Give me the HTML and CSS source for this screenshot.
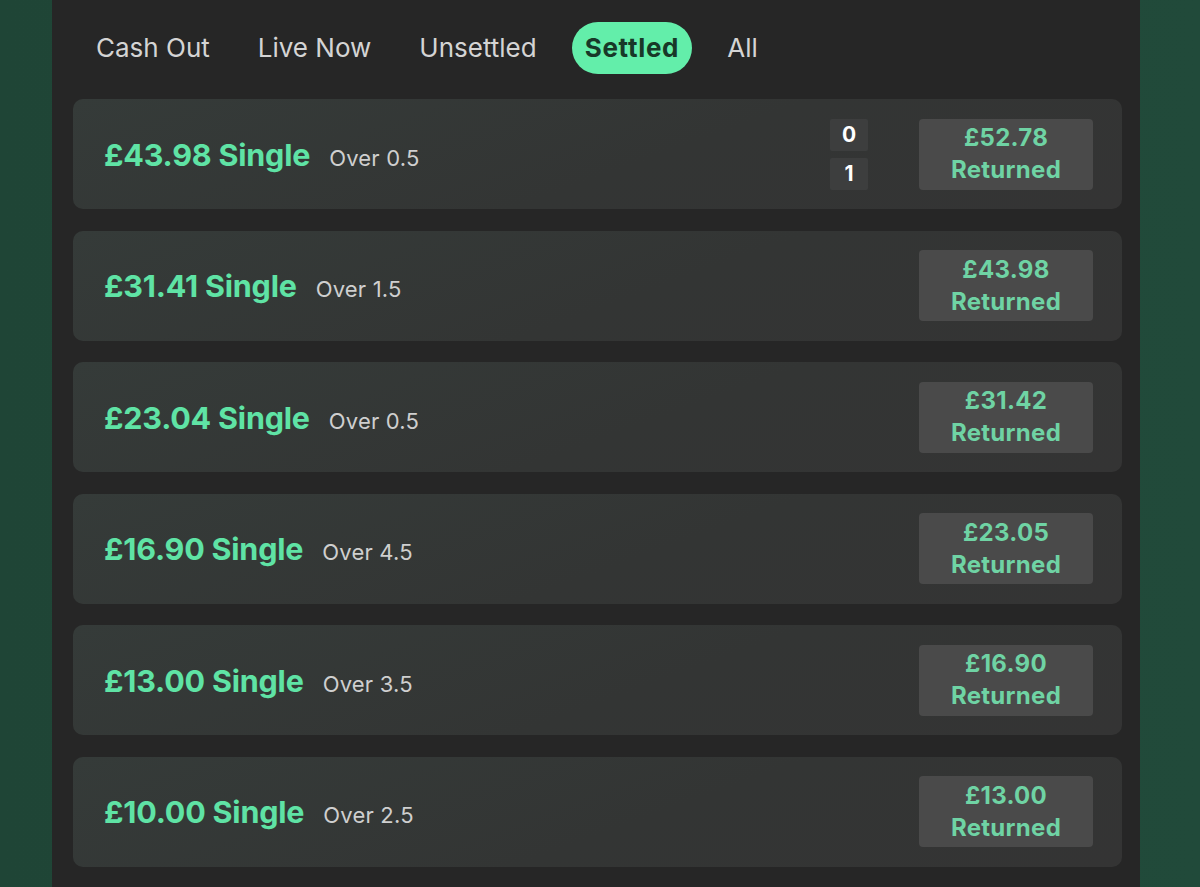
FILE: index.html
```html
<!DOCTYPE html>
<html lang="en">
<head>
<meta charset="utf-8">
<title>My Bets - Settled</title>
<link rel="stylesheet" href="styles.css">
</head>
<body>
<div class="page">
  <main class="panel">
    <nav class="tabs">
      <span class="tab">Cash Out</span>
      <span class="tab">Live Now</span>
      <span class="tab">Unsettled</span>
      <span class="tab active">Settled</span>
      <span class="tab">All</span>
    </nav>
    <section class="bets">
      <article class="bet">
        <div class="title"><span class="stake">£43.98 Single</span><span class="market">Over 0.5</span></div>
        <div class="score"><span>0</span><span>1</span></div>
        <div class="returned"><span>£52.78</span><span>Returned</span></div>
      </article>
      <article class="bet">
        <div class="title"><span class="stake">£31.41 Single</span><span class="market">Over 1.5</span></div>
        <div class="returned"><span>£43.98</span><span>Returned</span></div>
      </article>
      <article class="bet">
        <div class="title"><span class="stake">£23.04 Single</span><span class="market">Over 0.5</span></div>
        <div class="returned"><span>£31.42</span><span>Returned</span></div>
      </article>
      <article class="bet">
        <div class="title"><span class="stake">£16.90 Single</span><span class="market">Over 4.5</span></div>
        <div class="returned"><span>£23.05</span><span>Returned</span></div>
      </article>
      <article class="bet">
        <div class="title"><span class="stake">£13.00 Single</span><span class="market">Over 3.5</span></div>
        <div class="returned"><span>£16.90</span><span>Returned</span></div>
      </article>
      <article class="bet">
        <div class="title"><span class="stake">£10.00 Single</span><span class="market">Over 2.5</span></div>
        <div class="returned"><span>£13.00</span><span>Returned</span></div>
      </article>
    </section>
  </main>
</div>
</body>
</html>
```
FILE: styles.css
```css
html, body {
  margin: 0;
  padding: 0;
  height: 100%;
}
body {
  background: linear-gradient(90deg, #1f4536 0%, #214a3a 100%);
  font-family: Inter, "Noto Sans", "Liberation Sans", sans-serif;
  overflow: hidden;
}
.page {
  display: flex;
  height: 100%;
}
.panel {
  margin-left: 52px;
  width: 1088px;
  background: #262626;
  box-sizing: border-box;
  padding: 22px 18px 0 21px;
}
.tabs {
  display: flex;
  align-items: center;
  gap: 22px;
  padding-left: 10px;
  height: 52px;
  margin-bottom: 25px;
}
.tab {
  height: 52px;
  line-height: 52px;
  padding: 0 13px;
  border-radius: 26px;
  font-size: 26px;
  color: #d4d4d4;
  letter-spacing: 0;
}
.tab.active {
  background: #63eeaa;
  color: #183828;
  font-weight: 700;
  letter-spacing: 0.7px;
}
.bets {
  display: flex;
  flex-direction: column;
  gap: 21.6px;
}
.bet {
  height: 110px;
  border-radius: 10px;
  background: linear-gradient(160deg, #353b39 0%, #333534 55%, #343434 100%);
  display: flex;
  align-items: center;
  padding: 0 29px 0 31px;
}
.title {
  flex: 1;
  display: flex;
  align-items: baseline;
  gap: 19px;
}
.stake {
  font-size: 30.5px;
  font-weight: 700;
  color: #5fe3a5;
  letter-spacing: -0.2px;
}
.market {
  font-size: 22px;
  color: #cfcfcf;
  letter-spacing: 0.2px;
}
.score {
  display: flex;
  flex-direction: column;
  gap: 7px;
  margin-right: 51px;
}
.score span {
  width: 38px;
  height: 32px;
  line-height: 32px;
  text-align: center;
  background: #3d3e3e;
  border-radius: 2px;
  color: #ffffff;
  font-weight: 700;
  font-size: 21px;
}
.returned {
  width: 174px;
  height: 71px;
  background: #4a4a4a;
  border-radius: 4px;
  display: flex;
  flex-direction: column;
  align-items: center;
  justify-content: center;
  color: #6fd3a4;
  font-weight: 700;
  font-size: 24px;
  letter-spacing: 0.3px;
  line-height: 32px;
}
```
